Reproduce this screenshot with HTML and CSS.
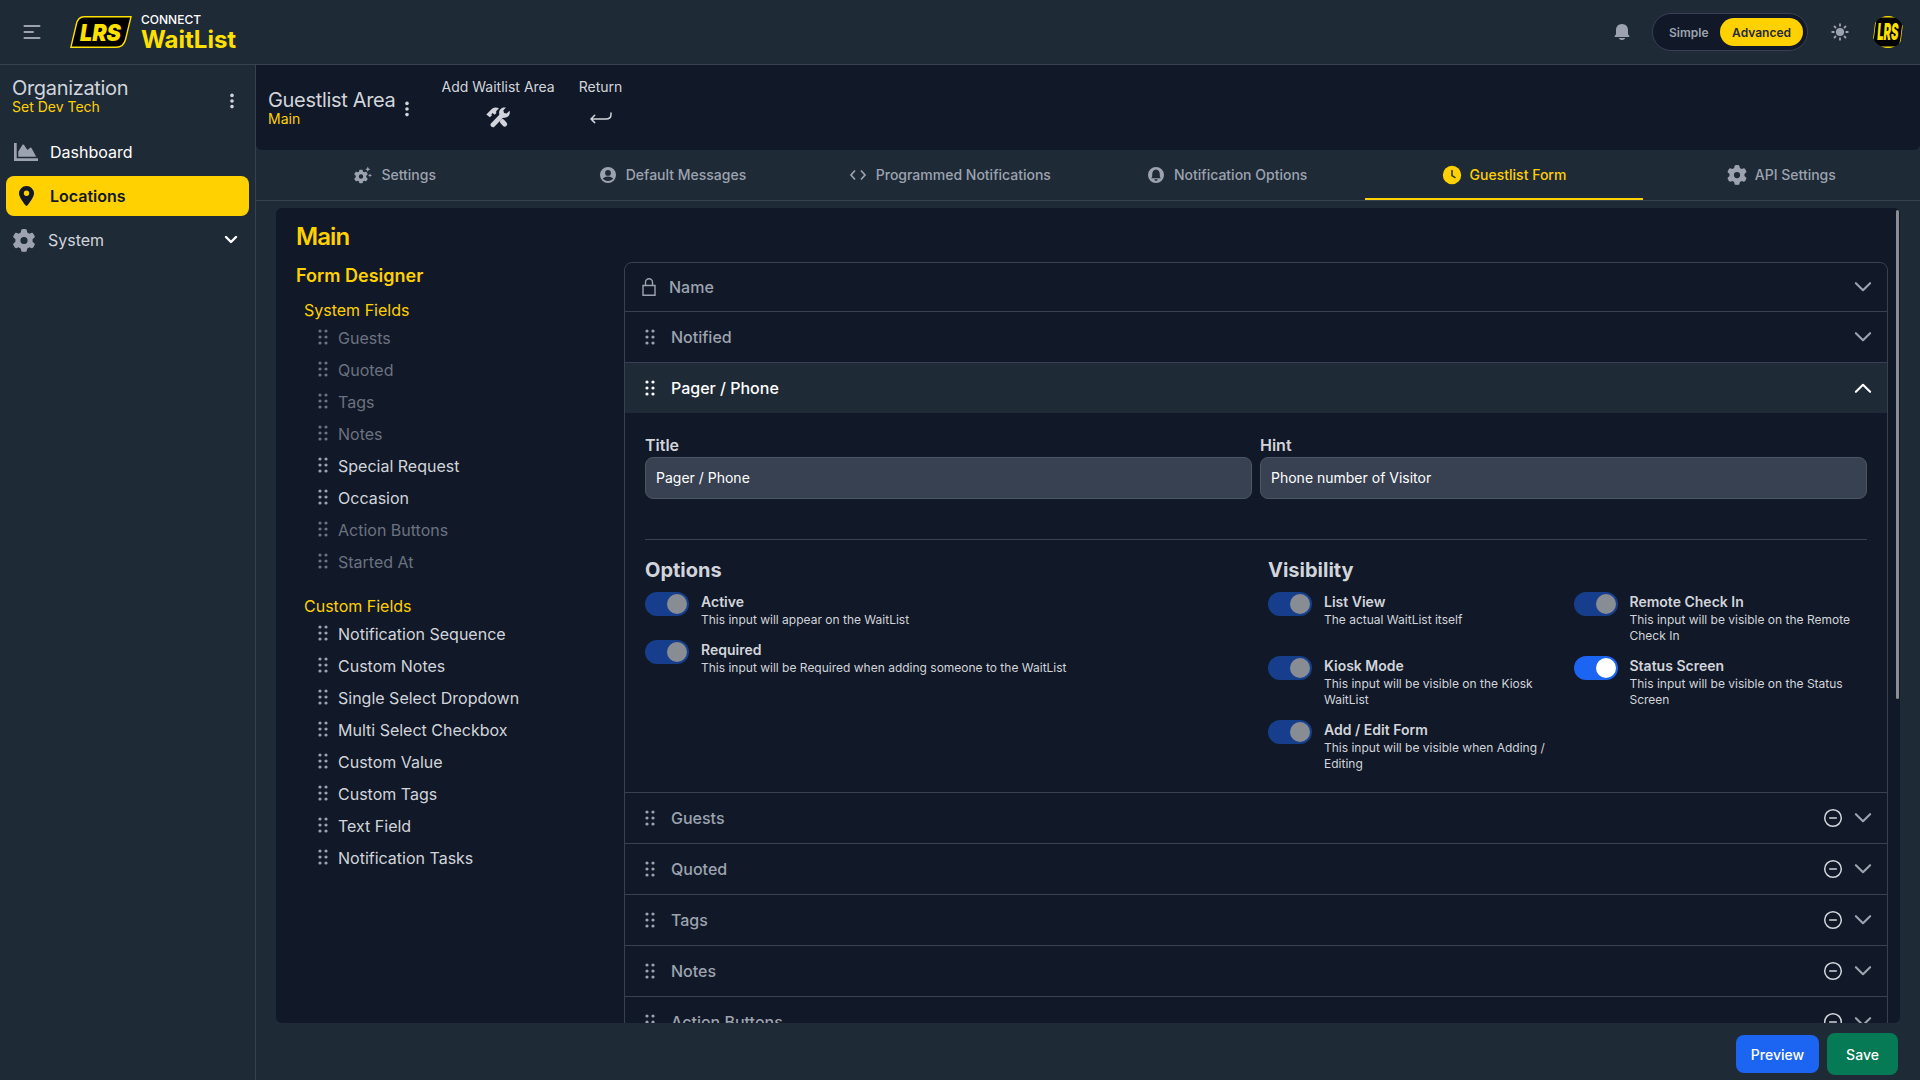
FILE: index.html
```html
<!DOCTYPE html>
<html lang="en">
<head>
    <meta charset="UTF-8">
    <meta name="viewport" content="width=device-width, initial-scale=1.0">
    <title>WaitList - Guestlist Form</title>
    <link rel="stylesheet" href="styles.css">
</head>
<body>
    <!-- shared icons -->
    <svg class="sprite" aria-hidden="true">
        <symbol id="grip" viewBox="0 0 20 20">
            <circle cx="7" cy="4" r="1.6"/><circle cx="13" cy="4" r="1.6"/>
            <circle cx="7" cy="10" r="1.6"/><circle cx="13" cy="10" r="1.6"/>
            <circle cx="7" cy="16" r="1.6"/><circle cx="13" cy="16" r="1.6"/>
        </symbol>
        <symbol id="dots" viewBox="0 0 6 16">
            <circle cx="3" cy="2.4" r="1.8"/><circle cx="3" cy="8" r="1.8"/><circle cx="3" cy="13.6" r="1.8"/>
        </symbol>
        <symbol id="chevron" viewBox="0 0 20 20">
            <path d="M2.9 6.2 10 13.2l7.1-7" fill="none" stroke="currentColor" stroke-width="2.1" stroke-linecap="round" stroke-linejoin="round"/>
        </symbol>
        <symbol id="minus" viewBox="0 0 20 20">
            <g fill="none" stroke="currentColor" stroke-width="1.5" stroke-linecap="round"><circle cx="10" cy="10" r="8.3"/><path d="M6.7 10h6.6"/></g>
        </symbol>
        <symbol id="gear" viewBox="0 0 512 512">
            <path d="M495.9 166.6c3.2 8.7.5 18.4-6.4 24.6l-43.3 39.4c1.1 8.3 1.7 16.8 1.7 25.4s-.6 17.1-1.7 25.4l43.3 39.4c6.9 6.2 9.6 15.9 6.4 24.6-4.4 11.9-9.7 23.3-15.8 34.3l-4.7 8.1c-6.6 11-14 21.4-22.1 31.2-5.9 7.2-15.7 9.6-24.5 6.8l-55.7-17.7c-13.4 10.3-28.2 18.9-44 25.4l-12.5 57.1c-2 9.1-9 16.3-18.2 17.8-13.8 2.3-28 3.5-42.5 3.5s-28.7-1.2-42.5-3.5c-9.2-1.5-16.2-8.7-18.2-17.8l-12.5-57.1c-15.8-6.5-30.6-15.1-44-25.4l-55.6 17.8c-8.8 2.8-18.6.3-24.5-6.8-8.1-9.8-15.5-20.2-22.1-31.2l-4.7-8.1c-6.1-11-11.4-22.4-15.8-34.3-3.2-8.7-.5-18.4 6.4-24.6l43.3-39.4C64.6 273.1 64 264.6 64 256s.6-17.1 1.7-25.4l-43.3-39.4c-6.9-6.2-9.6-15.9-6.4-24.6 4.4-11.9 9.7-23.3 15.8-34.3l4.7-8.1c6.6-11 14-21.4 22.1-31.2 5.9-7.2 15.7-9.6 24.5-6.8l55.7 17.7c13.4-10.3 28.2-18.9 44-25.4l12.5-57.1c2-9.1 9-16.3 18.2-17.8C227.3 1.2 241.5 0 256 0s28.7 1.2 42.5 3.5c9.2 1.5 16.2 8.7 18.2 17.8l12.5 57.1c15.8 6.5 30.6 15.1 44 25.4l55.7-17.7c8.8-2.8 18.6-.3 24.5 6.8 8.1 9.8 15.5 20.2 22.1 31.2l4.7 8.1c6.1 11 11.4 22.4 15.8 34.3zM256 336a80 80 0 1 0 0-160 80 80 0 1 0 0 160z"/>
        </symbol>
        <symbol id="lrs" viewBox="0 0 62 32" preserveAspectRatio="none">
            <path d="M14 .8H61L55.5 23.5Q53.6 31.2 46 31.2H.9L6.3 8.5Q8 .8 14 .8Z" fill="#000" stroke="#ffe100" stroke-width="1.4"/>
            <text x="10" y="24.5" textLength="41" lengthAdjust="spacingAndGlyphs" font-family="Inter, sans-serif" font-size="23.5" font-weight="900" font-style="italic" fill="#ffe100">LRS</text>
        </symbol>
    </svg>

    <header class="topbar">
        <svg class="menu-icon" viewBox="0 0 24 24"><path d="M4.5 6h15M4.5 12H13M4.5 18h15"/></svg>
        <svg class="logo"><use href="#lrs"/></svg>
        <div class="brand">
            <span class="brand-top">CONNECT</span>
            <span class="brand-name">WaitList</span>
        </div>
        <div class="topbar-right">
            <svg class="bell" viewBox="0 0 16 18"><path d="M8 1C4.2 1 2 3.8 2 7v4.3L.8 12.7c-.5.7-.1 1.3.6 1.3h13.2c.7 0 1.1-.6.6-1.3L14 11.3V7c0-3.200-2.200-6-6-6zM4.800 15h6.400c-.4 1.300-1.600 2-3.200 2s-2.800-.7-3.200-2z"/></svg>
            <div class="mode">
                <span>Simple</span>
                <span class="on">Advanced</span>
            </div>
            <svg class="sun" viewBox="0 0 18 18"><circle cx="9" cy="9" r="4.1"/><path d="M9 1.2v1.6M9 15.2v1.6M1.2 9h1.6M15.2 9h1.6M3.5 3.5l1 1M13.5 13.5l1 1M3.5 14.5l1-1M13.5 4.5l1-1"/></svg>
            <div class="avatar"><svg><use href="#lrs"/></svg></div>
        </div>
    </header>

    <div class="shell">
        <aside class="sidebar">
            <div class="org">
                <div>
                    <div class="area-title">Organization</div>
                    <div class="area-sub">Set Dev Tech</div>
                </div>
                <svg class="dots"><use href="#dots"/></svg>
            </div>
            <nav class="menu">
                <a class="menu-item">
                    <svg class="icon-chart" viewBox="0 0 24 18"><path d="M0 0h2.7v15.3H24V18H0zM4.3 13.7V8.4l4.2-6.6q.7-.8 1.4 0L13.4 7l2.8-2.3q.8-.5 1.3.2l4.7 8.8z"/></svg>
                    <span>Dashboard</span>
                </a>
                <a class="menu-item active">
                    <svg class="icon-pin" viewBox="0 0 15 20"><path d="M7.5 0A7.4 7.4 0 0 0 0 7.4C0 11 4.8 17 6.7 19.5q.8.9 1.6 0C10.2 17 15 11 15 7.4A7.4 7.4 0 0 0 7.5 0zm0 10a2.7 2.7 0 1 1 0-5.4 2.7 2.7 0 0 1 0 5.4z"/></svg>
                    <span>Locations</span>
                </a>
                <a class="menu-item">
                    <svg class="icon-gear"><use href="#gear"/></svg>
                    <span class="light">System</span>
                    <svg class="caret" viewBox="0 0 14 10"><path d="M2 2l5 5 5-5"/></svg>
                </a>
            </nav>
        </aside>

        <main class="main">
            <section class="page-head">
                <div>
                    <div class="area-title">Guestlist Area</div>
                    <div class="area-sub">Main</div>
                </div>
                <svg class="dots"><use href="#dots"/></svg>
                <div class="action">
                    <span>Add Waitlist Area</span>
                    <svg class="icon-tools" viewBox="0 0 24 21">
                        <path d="M.3 7.5 6 1.8C8 .2 11 .1 13 1.5L10.2 4v2.2L8.600 7.800 6.600 6 5.400 7.300 6 8.200 3.800 10.200z"/>
                        <path d="M16.4 14.6l2.3 2.5" fill="none" stroke="currentColor" stroke-width="5" stroke-linecap="round"/>
                        <path d="M6.9 17.8 16.5 7.8" fill="none" stroke="currentColor" stroke-width="4.8" stroke-linecap="round"/>
                        <path d="M20 .6 17.4 3.2l.5 2.7 2.7.5L23.5 3.7c1.2 3.5-1.3 7-4.8 7-3.6 0-5.8-2.3-5.6-5.4C13.3 2 16.5-.3 20 .6z"/>
                    </svg>
                </div>
                <div class="action">
                    <span>Return</span>
                    <svg class="icon-return" viewBox="0 0 22 12"><path d="M21 1v1.5C21 5.5 19 7 16 7H1.5M4.7 3.2 1 7l3.7 3.6"/></svg>
                </div>
            </section>

            <nav class="tabs">
                <a class="tab">
                    <svg viewBox="0 0 20 20"><use href="#gear" x="1" y="4.500" width="14" height="14"/><path d="M14.800 1.500l.8 1.900 1.900.8-1.900.8-.8 1.900-.8-1.900-1.900-.8 1.900-.8zM17 8.500l.6 1.300 1.400.6-1.400.6-.6 1.300-.6-1.300-1.400-.6 1.400-.6z"/></svg>
                    Settings
                </a>
                <a class="tab">
                    <svg viewBox="0 0 20 20"><path fill-rule="evenodd" d="M10 2a8 8 0 1 0 0 16 8 8 0 0 0 0-16zm0 3a2.900 2.900 0 1 1 0 5.800A2.900 2.900 0 0 1 10 5zm-5.200 8.500c1.300-1.300 3.200-2 5.200-2s3.900.7 5.200 2c-1 1.500-3 2.500-5.200 2.500s-4.200-1-5.200-2.500z"/></svg>
                    Default Messages
                </a>
                <a class="tab">
                    <svg viewBox="0 0 20 20"><path class="line" d="M7 5.500 3 10l4 4.500M13 5.500l4 4.500-4 4.500"/></svg>
                    Programmed Notifications
                </a>
                <a class="tab">
                    <svg viewBox="0 0 20 20"><path fill-rule="evenodd" d="M10 2a8 8 0 1 0 0 16 8 8 0 0 0 0-16zm0 2.600c2.600.4 3.700 2.200 3.800 4.600v2.300l1 1.700H5.200l1-1.700V9.200c.1-2.400 1.200-4.200 3.800-4.600zM8.200 14.200h3.600c-.3 1.100-.9 1.500-1.800 1.500s-1.500-.4-1.800-1.500z"/></svg>
                    Notification Options
                </a>
                <a class="tab active">
                    <svg viewBox="0 0 20 20"><circle cx="10" cy="10" r="9.200"/><path class="hand" d="M10 5.500V10.500l3 2"/></svg>
                    Guestlist Form
                </a>
                <a class="tab">
                    <svg viewBox="0 0 20 20"><use href="#gear" width="20" height="20"/></svg>
                    API Settings
                </a>
            </nav>

            <section class="panel">
                <h1>Main</h1>
                <div class="columns">
                    <div class="fields">
                        <h2>Form Designer</h2>
                        <h3>System Fields</h3>
                        <ul>
                            <li class="off"><svg><use href="#grip"/></svg>Guests</li>
                            <li class="off"><svg><use href="#grip"/></svg>Quoted</li>
                            <li class="off"><svg><use href="#grip"/></svg>Tags</li>
                            <li class="off"><svg><use href="#grip"/></svg>Notes</li>
                            <li><svg><use href="#grip"/></svg>Special Request</li>
                            <li><svg><use href="#grip"/></svg>Occasion</li>
                            <li class="off"><svg><use href="#grip"/></svg>Action Buttons</li>
                            <li class="off"><svg><use href="#grip"/></svg>Started At</li>
                        </ul>
                        <h3>Custom Fields</h3>
                        <ul>
                            <li><svg><use href="#grip"/></svg>Notification Sequence</li>
                            <li><svg><use href="#grip"/></svg>Custom Notes</li>
                            <li><svg><use href="#grip"/></svg>Single Select Dropdown</li>
                            <li><svg><use href="#grip"/></svg>Multi Select Checkbox</li>
                            <li><svg><use href="#grip"/></svg>Custom Value</li>
                            <li><svg><use href="#grip"/></svg>Custom Tags</li>
                            <li><svg><use href="#grip"/></svg>Text Field</li>
                            <li><svg><use href="#grip"/></svg>Notification Tasks</li>
                        </ul>
                    </div>

                    <div class="accordion">
                        <div class="row first">
                            <svg class="lock" viewBox="0 0 16 20"><path d="M2 8.500h12v9.800H2zM4.500 8.500V5.300a3.500 3.500 0 0 1 7 0v3.200"/></svg>
                            <span>Name</span>
                            <svg class="i20"><use href="#chevron"/></svg>
                        </div>
                        <div class="row">
                            <svg class="i20"><use href="#grip"/></svg>
                            <span>Notified</span>
                            <svg class="i20"><use href="#chevron"/></svg>
                        </div>
                        <div class="row open">
                            <svg class="i20"><use href="#grip"/></svg>
                            <span>Pager / Phone</span>
                            <svg class="i20 up"><use href="#chevron"/></svg>
                        </div>
                        <div class="body">
                            <div class="inputs">
                                <label>Title<input type="text" value="Pager / Phone"></label>
                                <label>Hint<input type="text" value="Phone number of Visitor"></label>
                            </div>
                            <hr>
                            <div class="settings">
                                <div>
                                    <h4>Options</h4>
                                    <div class="toggles">
                                        <div class="toggle disabled"><i></i><p><b>Active</b>This input will appear on the WaitList</p></div>
                                        <div class="toggle disabled"><i></i><p><b>Required</b>This input will be Required when adding someone to the WaitList</p></div>
                                    </div>
                                </div>
                                <div>
                                    <h4>Visibility</h4>
                                    <div class="toggles two">
                                        <div class="toggle disabled"><i></i><p><b>List View</b>The actual WaitList itself</p></div>
                                        <div class="toggle disabled"><i></i><p><b>Remote Check In</b>This input will be visible on the Remote Check In</p></div>
                                        <div class="toggle disabled"><i></i><p><b>Kiosk Mode</b>This input will be visible on the Kiosk WaitList</p></div>
                                        <div class="toggle"><i></i><p><b>Status Screen</b>This input will be visible on the Status Screen</p></div>
                                        <div class="toggle disabled"><i></i><p><b>Add / Edit Form</b>This input will be visible when Adding / Editing</p></div>
                                    </div>
                                </div>
                            </div>
                        </div>
                        <div class="row">
                            <svg class="i20"><use href="#grip"/></svg>
                            <span>Guests</span>
                            <svg class="i20 remove"><use href="#minus"/></svg>
                            <svg class="i20"><use href="#chevron"/></svg>
                        </div>
                        <div class="row">
                            <svg class="i20"><use href="#grip"/></svg>
                            <span>Quoted</span>
                            <svg class="i20 remove"><use href="#minus"/></svg>
                            <svg class="i20"><use href="#chevron"/></svg>
                        </div>
                        <div class="row">
                            <svg class="i20"><use href="#grip"/></svg>
                            <span>Tags</span>
                            <svg class="i20 remove"><use href="#minus"/></svg>
                            <svg class="i20"><use href="#chevron"/></svg>
                        </div>
                        <div class="row">
                            <svg class="i20"><use href="#grip"/></svg>
                            <span>Notes</span>
                            <svg class="i20 remove"><use href="#minus"/></svg>
                            <svg class="i20"><use href="#chevron"/></svg>
                        </div>
                        <div class="row">
                            <svg class="i20"><use href="#grip"/></svg>
                            <span>Action Buttons</span>
                            <svg class="i20 remove"><use href="#minus"/></svg>
                            <svg class="i20"><use href="#chevron"/></svg>
                        </div>
                    </div>
                </div>
                <div class="scrollbar"></div>
            </section>

            <footer class="footer">
                <button class="btn preview">Preview</button>
                <button class="btn save">Save</button>
            </footer>
        </main>
    </div>
</body>
</html>
```
FILE: styles.css
```css
* {
    box-sizing: border-box;
}
body {
    margin: 0;
    height: 100vh;
    overflow: hidden;
    background-color: #1f2a37;
    color: #d1d5db;
    font-family: Inter, sans-serif;
    font-size: 16px;
    line-height: 24px;
}
svg {
    display: block;
    flex: none;
    fill: currentColor;
}
h1, h2, h3, h4, ul, p {
    margin: 0;
    padding: 0;
}
.sprite {
    display: none;
}

/* top bar */
.topbar {
    display: flex;
    align-items: center;
    height: 65px;
    padding: 0 16px 0 20px;
    border-bottom: 1px solid #374151;
}
.menu-icon {
    width: 24px;
    height: 24px;
    fill: none;
    stroke: #9ca3af;
    stroke-width: 2;
    stroke-linecap: round;
}
.logo {
    width: 62px;
    height: 32px;
    margin-left: 26px;
}
.brand {
    display: flex;
    flex-direction: column;
    margin-left: 9px;
    padding-bottom: 1px;
}
.brand-top {
    color: #fff;
    font-size: 12px;
    font-weight: 500;
    line-height: 15px;
}
.brand-name {
    color: #ffe100;
    font-size: 24px;
    font-weight: 700;
    line-height: 25px;
}
.topbar-right {
    display: flex;
    align-items: center;
    margin-left: auto;
    color: #9ca3af;
}
.bell {
    width: 16px;
    height: 18px;
}
.mode {
    display: flex;
    align-items: center;
    width: 156px;
    height: 38px;
    margin-left: 22px;
    padding: 0 4px 0 16px;
    border: 1px solid #374151;
    border-radius: 19px;
    background-color: #111827;
    font-size: 12px;
    font-weight: 600;
}
.mode span {
    padding-top: 1px;
}
.mode .on {
    margin-left: auto;
    padding: 1px 12px 0;
    border-radius: 14px;
    background-color: #ffd100;
    color: #1f2937;
    line-height: 27px;
}
.sun {
    width: 18px;
    height: 18px;
    margin-left: 23px;
    stroke: currentColor;
    stroke-width: 1.8;
    stroke-linecap: round;
}
.sun circle {
    stroke: none;
}
.avatar {
    width: 32px;
    height: 32px;
    margin-left: 23px;
    border-radius: 50%;
    overflow: hidden;
}
.avatar svg {
    width: 32px;
    height: 32px;
}

/* sidebar */
.shell {
    display: flex;
    height: calc(100vh - 65px);
}
.sidebar {
    width: 256px;
    padding: 13px 6px 0;
    border-right: 1px solid #374151;
}
.area-title {
    font-size: 20px;
    line-height: 20px;
    letter-spacing: -0.32px;
}
.area-sub {
    color: #ffd100;
    font-size: 14px;
    line-height: 18px;
}
.dots {
    width: 6px;
    height: 16px;
}
.org {
    display: flex;
    justify-content: space-between;
    height: 54px;
    padding: 0 14px 0 6px;
}
.org .dots {
    margin-top: 15px;
}
.menu {
    display: flex;
    flex-direction: column;
    gap: 4px;
}
.menu-item {
    display: flex;
    align-items: center;
    height: 40px;
    border-radius: 8px;
    color: #9ca3af;
}
.menu-item span {
    color: #fff;
}
.menu-item .light {
    color: #d1d5db;
}
.menu-item.active {
    background-color: #ffd100;
    color: #111827;
}
.menu-item.active span {
    color: #111827;
    font-weight: 600;
}
.icon-chart {
    width: 24px;
    height: 18px;
    margin: 0 12px 0 8px;
}
.icon-pin {
    width: 15px;
    height: 20px;
    margin: 0 16px 0 13px;
}
.icon-gear {
    width: 24px;
    height: 23px;
    margin: 0 12px 0 6px;
}
.caret {
    width: 14px;
    height: 10px;
    margin: 0 11px 0 auto;
    fill: none;
    stroke: #fff;
    stroke-width: 2.4;
    stroke-linecap: round;
    stroke-linejoin: round;
}

/* page header */
.main {
    display: flex;
    flex-direction: column;
    flex: 1;
    min-width: 0;
}
.page-head {
    display: flex;
    height: 85px;
    padding: 25px 12px 0;
    border-radius: 0 0 6px 6px;
    background-color: #111827;
}
.page-head .dots {
    margin: 11px 32px 0 8px;
}
.action {
    display: flex;
    flex-direction: column;
    align-items: center;
    margin: -13px 24px 0 0;
    font-size: 14px;
    line-height: 20px;
}
.icon-tools {
    width: 24px;
    height: 21px;
    margin-top: 10px;
}
.icon-return {
    width: 22px;
    height: 12px;
    margin-top: 15px;
    fill: none;
    stroke: currentColor;
    stroke-width: 1.5;
    stroke-linecap: round;
    stroke-linejoin: round;
}

/* tabs */
.tabs {
    display: grid;
    grid-template-columns: repeat(6, 1fr);
    height: 51px;
    border-bottom: 1px solid #374151;
}
.tab {
    display: flex;
    justify-content: center;
    align-items: center;
    gap: 8px;
    padding-top: 1px;
    border-bottom: 2px solid transparent;
    color: #9ca3af;
    font-size: 14px;
    font-weight: 500;
}
.tab svg {
    width: 20px;
    height: 20px;
}
.tab.active {
    border-color: #ffd100;
    color: #ffd100;
}
.tab .line {
    fill: none;
    stroke: currentColor;
    stroke-width: 1.7;
}
.tab .hand {
    fill: none;
    stroke: #1f2937;
    stroke-width: 1.5;
    stroke-linecap: round;
}

/* form designer */
.panel {
    position: relative;
    height: 815px;
    margin: 7px 20px 0;
    padding: 13px 12px 0 20px;
    border-radius: 6px;
    background-color: #111827;
    overflow: hidden;
}
.scrollbar {
    position: absolute;
    top: 2px;
    right: 1px;
    width: 3px;
    height: 489px;
    border-radius: 2px;
    background-color: #8b8d90;
}
h1 {
    margin-bottom: 9px;
    color: #ffd100;
    font-size: 24px;
    font-weight: 600;
    line-height: 32px;
    letter-spacing: -0.9px;
}
.columns {
    display: grid;
    grid-template-columns: 328px 1fr;
}
h2 {
    margin-bottom: 8px;
    color: #ffd100;
    font-size: 18px;
    font-weight: 600;
    line-height: 28px;
}
h3 {
    margin-left: 8px;
    color: #ffd100;
    font-size: 16px;
    font-weight: 400;
}
.fields ul {
    margin-bottom: 16px;
    padding-left: 17px;
    list-style: none;
}
.fields li {
    display: flex;
    gap: 5px;
    padding: 4px 0;
}
.fields li svg {
    width: 20px;
    height: 20px;
    margin-top: 1px;
    color: #9ca3af;
}
.fields .off {
    color: #6b7280;
}
.fields .off svg {
    color: #6b7280;
}
.accordion {
    border: 1px solid #374151;
    border-radius: 8px;
}
.row {
    display: flex;
    align-items: center;
    height: 51px;
    padding: 0 14px 0 15px;
    border-top: 1px solid #374151;
    color: #9ca3af;
    font-weight: 500;
}
.row.first {
    height: 48px;
    border-top: none;
}
.row span {
    flex: 1;
    margin-left: 11px;
}
.row.open {
    background-color: #1f2a37;
    color: #fff;
}
.i20 {
    width: 20px;
    height: 20px;
}
.up {
    transform: rotate(180deg);
}
.remove {
    margin-right: 10px;
    color: #d1d5db;
}
.lock {
    width: 16px;
    height: 20px;
    margin: 0 2px 0 1px;
    fill: none;
    stroke: currentColor;
    stroke-width: 1.4;
}
.lock + span {
    margin-left: 10px;
}
.body {
    padding: 20px;
}
.inputs {
    display: grid;
    grid-template-columns: 1fr 1fr;
    gap: 8px;
    font-weight: 600;
}
.inputs input {
    display: block;
    width: 100%;
    height: 42px;
    padding: 0 10px 1px;
    border: 1px solid #4b5563;
    border-radius: 8px;
    background-color: #374151;
    color: #fff;
    font: 14px Inter, sans-serif;
}
hr {
    margin: 40px 0 16px;
    border: none;
    border-top: 1px solid #374151;
}
.settings {
    display: grid;
    grid-template-columns: 1fr 1fr;
    gap: 24px;
}
h4 {
    margin-bottom: 8px;
    font-size: 20px;
    font-weight: 700;
    line-height: 28px;
}
.toggles {
    display: grid;
    gap: 12px;
}
.toggles.two {
    grid-template-columns: 1fr 1fr;
}
.toggle {
    display: flex;
    gap: 12px;
    font-size: 12px;
    line-height: 16px;
}
.toggle i {
    flex: none;
    width: 44px;
    height: 24px;
    padding: 2px 2px 2px 22px;
    border-radius: 12px;
    background-color: #1c64f2;
}
.toggle i::after {
    content: "";
    display: block;
    width: 20px;
    height: 20px;
    border-radius: 50%;
    background-color: #fff;
}
.toggle.disabled i {
    opacity: .5;
}
.toggle b {
    display: block;
    font-size: 14px;
    font-weight: 600;
    line-height: 20px;
}

/* footer buttons */
.footer {
    display: flex;
    justify-content: flex-end;
    align-items: center;
    gap: 8px;
    height: 57px;
    padding: 5px 22px 0 0;
}
.btn {
    padding-top: 2px;
    border: none;
    border-radius: 8px;
    color: #fff;
    font: 500 14px/20px Inter, sans-serif;
}
.preview {
    width: 83px;
    height: 38px;
    background-color: #1c64f2;
}
.save {
    width: 71px;
    height: 42px;
    background-color: #057a55;
}
```
